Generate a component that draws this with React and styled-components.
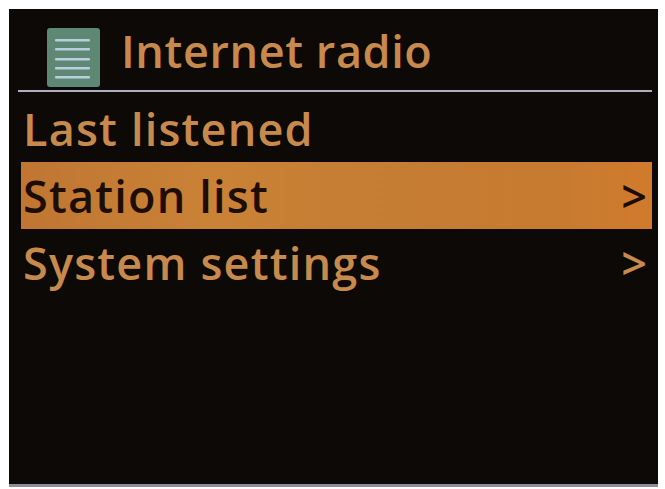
import React from 'react'
import styled, { createGlobalStyle } from 'styled-components'

const GlobalStyle = createGlobalStyle`
  html, body {
    margin: 0;
    padding: 0;
    background: #ffffff;
  }
  body {
    font-family: "Open Sans", "Noto Sans", sans-serif;
  }
`

const Page = styled.div`
  width: 665px;
  height: 489px;
  padding: 9px 7px 2px 9px;
  box-sizing: border-box;
`

const Screen = styled.div`
  height: 100%;
  background: #0c0907;
  border-bottom: 3px solid #8e8e9a;
  box-sizing: border-box;
  display: flex;
  flex-direction: column;
`

const Header = styled.div`
  display: flex;
  align-items: flex-start;
  height: 81px;
  padding: 12px 0 0 38px;
  box-sizing: border-box;
`

const IconBox = styled.svg`
  margin-top: 7px;
  flex: none;
`

const Title = styled.h1`
  margin: 0 0 0 21px;
  font-size: 45px;
  font-weight: 600;
  line-height: 60px;
  letter-spacing: 0.6px;
  color: #c88a4c;
`

const Divider = styled.div`
  height: 2px;
  margin: 0 6px 0 9px;
  background: #aeb0bd;
`

const Menu = styled.ul`
  list-style: none;
  margin: 3px 0 0;
  padding: 0;
`

const Row = styled.li`
  display: flex;
  align-items: center;
  justify-content: space-between;
  height: 67px;
  margin: 0 6px 0 12px;
  padding: 0 5px 0 2px;
  font-size: 45px;
  font-weight: 600;
  line-height: 67px;
  letter-spacing: 1.2px;
  color: ${p => (p.$active ? '#1c0e06' : '#c88a4c')};
  background: ${p =>
    p.$active
      ? 'linear-gradient(90deg, #c07632 0%, #c98236 30%, #c57c33 60%, #c77b30 85%, #d17a2c 100%)'
      : 'transparent'};
`

const Chevron = styled.span`
  letter-spacing: 0;
`

function MenuIcon() {
  return (
    <IconBox width="53" height="59" viewBox="0 0 53 59">
      <rect x="0" y="0" width="53" height="59" rx="3" fill="#5e8874" />
      {[11, 20, 30, 39, 48].map(y => (
        <rect key={y} x="8" y={y} width="35" height="2.5" rx="1" fill="#b7cfdc" />
      ))}
    </IconBox>
  )
}

const items = [
  { label: 'Last listened', sub: false },
  { label: 'Station list', sub: true, active: true },
  { label: 'System settings', sub: true },
]

export default function App() {
  return (
    <>
      <GlobalStyle />
      <Page>
        <Screen>
          <Header>
            <MenuIcon />
            <Title>Internet radio</Title>
          </Header>
          <Divider />
          <Menu>
            {items.map(item => (
              <Row key={item.label} $active={item.active}>
                <span>{item.label}</span>
                {item.sub && <Chevron>&gt;</Chevron>}
              </Row>
            ))}
          </Menu>
        </Screen>
      </Page>
    </>
  )
}
